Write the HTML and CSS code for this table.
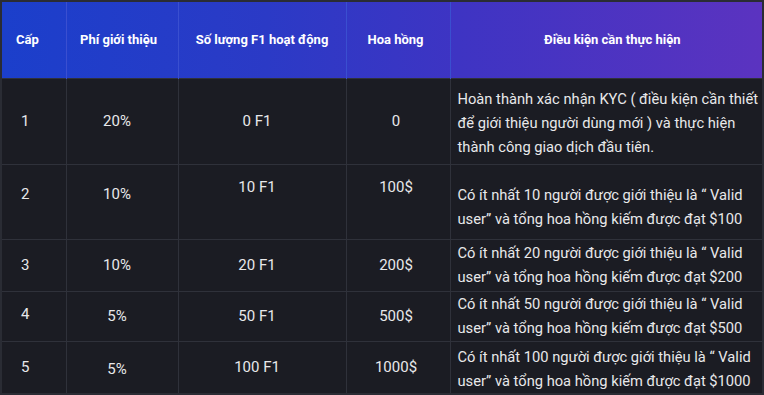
FILE: index.html
```html
<!DOCTYPE html>
<html lang="vi">
<head>
<meta charset="utf-8">
<title>Bảng hoa hồng</title>
<link rel="stylesheet" href="styles.css">
</head>
<body>
<div class="frame">
<table class="tbl">
  <colgroup>
    <col class="w1"><col class="w2"><col class="w3"><col class="w4"><col class="w5">
  </colgroup>
  <thead>
    <tr class="head">
      <th class="c1">Cấp</th>
      <th class="c2">Phí giới thiệu</th>
      <th class="c3">Số lượng F1 hoạt động</th>
      <th class="c4">Hoa hồng</th>
      <th class="c5">Điều kiện cần thực hiện</th>
    </tr>
  </thead>
  <tbody>
    <tr class="r1">
      <td class="c1">1</td>
      <td class="c2">20%</td>
      <td class="c3">0 F1</td>
      <td class="c4">0</td>
      <td class="c5">Hoàn thành xác nhận KYC ( điều kiện cần thiết để giới thiệu người dùng mới ) và thực hiện thành công giao dịch đầu tiên.</td>
    </tr>
    <tr class="r2">
      <td class="c1">2</td>
      <td class="c2">10%</td>
      <td class="c3">10 F1</td>
      <td class="c4">100$</td>
      <td class="c5">Có ít nhất 10 người được giới thiệu là “ Valid user” và tổng hoa hồng kiếm được đạt $100</td>
    </tr>
    <tr class="r3">
      <td class="c1">3</td>
      <td class="c2">10%</td>
      <td class="c3">20 F1</td>
      <td class="c4">200$</td>
      <td class="c5">Có ít nhất 20 người được giới thiệu là “ Valid user” và tổng hoa hồng kiếm được đạt $200</td>
    </tr>
    <tr class="r4">
      <td class="c1">4</td>
      <td class="c2">5%</td>
      <td class="c3">50 F1</td>
      <td class="c4">500$</td>
      <td class="c5">Có ít nhất 50 người được giới thiệu là “ Valid user” và tổng hoa hồng kiếm được đạt $500</td>
    </tr>
    <tr class="r5">
      <td class="c1">5</td>
      <td class="c2">5%</td>
      <td class="c3">100 F1</td>
      <td class="c4">1000$</td>
      <td class="c5">Có ít nhất 100 người được giới thiệu là “ Valid user” và tổng hoa hồng kiếm được đạt $1000</td>
    </tr>
  </tbody>
</table>
</div>
</body>
</html>
```
FILE: styles.css
```css
html, body {
  margin: 0;
  padding: 0;
  background: #22242b;
}
body {
  width: 764px;
  height: 395px;
  overflow: hidden;
  font-family: Roboto, "Noto Sans", sans-serif;
}
.frame {
  box-sizing: border-box;
  width: 764px;
  height: 395px;
  padding: 2px 2px 3px 2px;
  background: #2a2c34;
}
.tbl {
  width: 100%;
  height: 100%;
  border-collapse: collapse;
  table-layout: fixed;
  background: #1b1c23;
  color: #e8e8ea;
}
.w1 { width: 64px; }
.w2 { width: 112px; }
.w3 { width: 168px; }
.w4 { width: 104px; }
.w5 { width: auto; }

.tbl th, .tbl td {
  border: 1px solid #2f313a;
  padding: 0;
  vertical-align: middle;
  box-sizing: border-box;
}
.tbl th:first-child, .tbl td:first-child { border-left: none; }
.tbl th:last-child, .tbl td:last-child { border-right: none; }
.tbl tbody tr:last-child td { border-bottom: none; }

.head {
  height: 76px;
  background: linear-gradient(90deg, #1b3fcb 0%, #2b3ac6 35%, #3e34c3 60%, #5b33c0 100%);
}
.head th {
  color: #ffffff;
  font-weight: 700;
  font-size: 13px;
  text-align: center;
  border-color: #3a4fd0;
  border-top: none;
  border-bottom: none;
}
.head th.c1 { text-align: left; padding-left: 14px; }
.head th.c2 { padding-right: 7px; }
.head th.c4 { padding-right: 5px; }
.head th.c5 { padding-left: 12px; }

.tbl td {
  font-size: 15px;
  line-height: 24px;
  text-align: center;
}
.tbl td.c1 { text-align: left; padding-left: 19px; }
.tbl td.c2 { padding-right: 10px; }
.tbl td.c3 { padding-right: 10px; }
.tbl td.c4 { padding-right: 4px; }
.tbl td.c5 { text-align: left; padding: 0 0 0 7px; font-size: 14.7px; }

.r1 { height: 86px; }
.r2 { height: 75px; }
.r3 { height: 52px; }
.r4 { height: 50px; }
.r5 { height: 51px; }

.r1 td.c5 { padding-top: 4px; }
.r2 td.c1, .r2 td.c2 { padding-bottom: 15px; }
.r2 td.c3, .r2 td.c4 { padding-bottom: 29px; }
.r2 td.c5 { padding-top: 10px; }
.r4 td.c1 { padding-bottom: 4px; }
.r5 td.c5 { padding-top: 3px; }
.r5 td.c2 { padding-top: 4px; }
```
